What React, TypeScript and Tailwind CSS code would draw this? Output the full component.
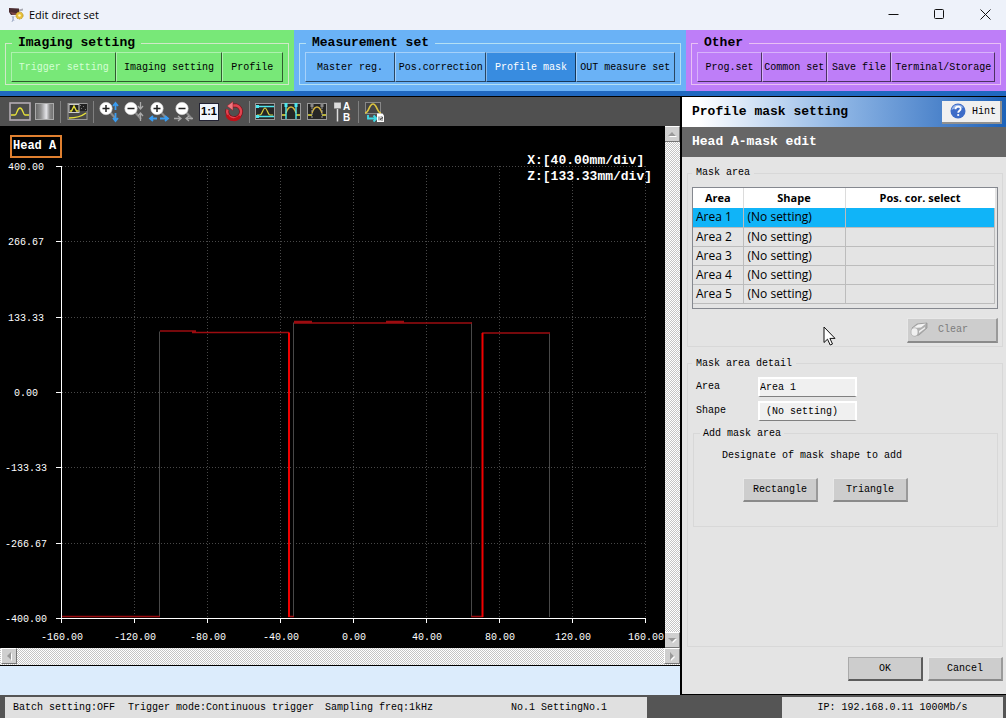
import React from "react";

const RAISED =
  "border border-t-white/40 border-l-white/40 border-b-black/60 border-r-black/60";
const GRAY_BUTTON =
  "flex h-6 w-[75px] items-center justify-center border-t border-l border-r-2 border-b-2 border-t-[#e8e8e8] border-l-[#e8e8e8] border-r-[#9a9a9a] border-b-[#8a8a8a] bg-[#cdcdcd]";

type NavItem = { label: string; state?: "muted" | "active" };

function NavGroup({
  title,
  items,
  className,
  columns,
  border,
}: {
  title: string;
  items: NavItem[];
  className: string;
  columns: string;
  border: string;
}) {
  return (
    <section className={`px-[5px] py-1.5 ${className}`}>
      <fieldset className={`min-w-0 border px-[5px] py-0.5 ${border}`}>
        <legend className="ml-px px-1.5 text-[13px] leading-[14px] font-bold">{title}</legend>
        <div className={`grid ${columns}`}>
          {items.map((item) => (
            <button
              key={item.label}
              type="button"
              className={`h-[30px] whitespace-nowrap ${RAISED} ${
                item.state === "active" ? "bg-[#388ce0] text-white" : ""
              } ${item.state === "muted" ? "text-[#d4ffd4]" : ""}`}
            >
              {item.label}
            </button>
          ))}
        </div>
      </fieldset>
    </section>
  );
}

function Tool({ label, children }: { label: string; children: React.ReactNode }) {
  return (
    <button type="button" aria-label={label} className="h-[22px] w-[22px]">
      <svg viewBox="0 0 22 22" className="block h-full w-full" fill="none">
        {children}
      </svg>
    </button>
  );
}

function Separator() {
  return <span className="mx-1 h-[22px] w-px bg-[#808080]" />;
}

function Lens({ x, minus }: { x: number; minus?: boolean }) {
  return (
    <g>
      <path d={`M${x + 3} 10l7 8`} stroke="#8a8a8a" strokeWidth="2" />
      <circle cx={x} cy="7.5" r="6.2" fill="#fff" stroke="#d0d0d0" strokeWidth="0.6" />
      <path d={minus ? `M${x - 3.5} 7.5h7` : `M${x - 3.5} 7.5h7M${x} 4v7`} stroke="#222" strokeWidth="1.5" />
    </g>
  );
}

function Toolbar() {
  return (
    <div className="flex h-[29px] items-center bg-[#505050] pl-[9px]">
      <div className="flex gap-[3px]">
        <Tool label="Profile view">
          <rect x="1" y="2" width="20" height="17" fill="#4c4c4c" stroke="#b4acb4" strokeWidth="1.6" />
          <path d="M2 14h4c2 0 2-7 5-7s3 7 5 7h4" stroke="#e6e03a" strokeWidth="1.3" />
        </Tool>
        <Tool label="Grayscale view">
          <defs>
            <linearGradient id="shade">
              <stop offset="0" stopColor="#666" />
              <stop offset="0.3" stopColor="#909090" />
              <stop offset="0.6" stopColor="#e4e4e8" />
              <stop offset="0.8" stopColor="#888" />
              <stop offset="1" stopColor="#707070" />
            </linearGradient>
          </defs>
          <rect x="1.5" y="2.5" width="18" height="16" fill="url(#shade)" stroke="#aaa" />
        </Tool>
      </div>
      <Separator />
      <div className="flex px-px">
        <Tool label="Combined view">
          <rect x="2" y="2.5" width="19" height="16" fill="#484848" stroke="#999" />
          <path d="M13 3h8v7h-8z" fill="#222" />
          <path d="M14 4h1v1h-1zM17 5h1v1h-1zM19 8h1v1h-1zM15 7h1v1h-1z" fill="#777" />
          <rect x="3" y="3.5" width="10" height="8" fill="#222" stroke="#ccc" />
          <path d="M4 10h1.5l2.5-5 2.5 5h2" stroke="#e6e03a" strokeWidth="1.4" />
          <path d="M3 17c6 0 13-2 17-5" stroke="#e6e03a" strokeWidth="1.5" />
        </Tool>
      </div>
      <Separator />
      <div className="flex gap-[3px]">
        <Tool label="Zoom in vertically">
          <Lens x={8} />
          <path d="M17.5 9V2M15 5l2.5-3 2.5 3M17.5 12v8M15 17l2.5 3 2.5-3" stroke="#3a9cf0" strokeWidth="1.8" />
        </Tool>
        <Tool label="Zoom out vertically">
          <Lens x={8} minus />
          <path d="M17.5 1v7M15 5l2.5 3 2.5-3M17.5 20v-8M15 15l2.5-3 2.5 3" stroke="#aaa" strokeWidth="1.3" />
        </Tool>
        <Tool label="Zoom in horizontally">
          <Lens x={9} />
          <path d="M9 17.5H2M5 15l-3 2.5 3 2.5M12 17.5h8M17 15l3 2.5-3 2.5" stroke="#3a9cf0" strokeWidth="1.8" />
        </Tool>
        <Tool label="Zoom out horizontally">
          <Lens x={9} minus />
          <path d="M1 17.5h7M5 15l3 2.5-3 2.5M20 17.5h-7M16 15l-3 2.5 3 2.5" stroke="#aaa" strokeWidth="1.3" />
        </Tool>
        <button
          type="button"
          className="mx-px my-0.5 flex h-[18px] w-5 items-center justify-center border border-[#223] bg-[#f0f5fc] font-['Liberation_Sans',sans-serif] text-[11px] font-bold"
        >
          1:1
        </button>
        <Tool label="Redraw">
          <path d="M4.5 8.5a7 6.5 0 1 0 9-4H8" stroke="#7c1018" strokeWidth="3.8" />
          <path d="M4.5 8.5a7 6.5 0 1 0 9-4H8" stroke="#e04450" strokeWidth="2.4" />
          <path d="M4 14a7 6.5 0 0 0 13 1" stroke="#c01018" strokeWidth="3" />
          <path d="M10 0.5L4 5l6 4.5z" fill="#f07880" stroke="#8c1820" strokeWidth="0.5" />
        </Tool>
      </div>
      <Separator />
      <div className="flex gap-1">
        <Tool label="Height range">
          <rect x="1.5" y="2.5" width="19" height="16" fill="#262626" stroke="#999" />
          <path d="M3 14h3c2 0 3-7 5-7s3 7 5 7h3" stroke="#d8d040" strokeWidth="1.2" />
          <path d="M2 5.5h18M2 15.5h18" stroke="#4fe8ee" strokeWidth="1.6" />
          <path d="M2 4h3v3H2zM2 14h3v3H2z" fill="#4fe8ee" />
        </Tool>
        <Tool label="Width range">
          <rect x="1.5" y="2.5" width="19" height="16" fill="#262626" stroke="#999" />
          <path d="M2 14h4M16 14h4" stroke="#e8e040" strokeWidth="1.6" />
          <path d="M6 12c1-3 3-6 5-6s4 3 5 6" stroke="#d8b840" strokeWidth="1.4" />
          <path d="M6 3v15M16 3v15" stroke="#4fe8ee" strokeWidth="1.4" />
          <path d="M4.5 2h3v4h-3zM14.5 2h3v4h-3z" fill="#4fe8ee" />
        </Tool>
        <Tool label="Masked range">
          <rect x="1.5" y="2.5" width="19" height="16" fill="#262626" stroke="#999" />
          <path d="M2 14h4M16 14h4" stroke="#e8e040" strokeWidth="1.6" />
          <path d="M6 12c1-3 3-6 5-6s4 3 5 6" stroke="#d8b840" strokeWidth="1.4" />
          <path d="M6 3v15M16 3v15" stroke="#999" strokeDasharray="2 1" />
          <path d="M4.5 2h3v4h-3zM14.5 2h3v4h-3z" fill="#888" />
        </Tool>
        <button type="button" className="flex h-[22px] w-[22px] items-center gap-0.5 pl-0.5">
          <svg viewBox="0 0 7 20" className="h-5 w-[7px]" fill="none">
            <rect x="0" y="0.5" width="7" height="6" fill="#ddd" stroke="#888" strokeWidth="0.5" />
            <path d="M3.500 7v12.500" stroke="#ddd" strokeWidth="1.5" />
          </svg>
          <span className="flex flex-col font-['Liberation_Sans',sans-serif] text-[10px] leading-[11px] font-bold text-white">
            <span>A</span>
            <span>B</span>
          </span>
        </button>
      </div>
      <Separator />
      <Tool label="Save profile">
        <rect x="2.5" y="1.5" width="15" height="11" fill="#444" stroke="#888" />
        <path d="M2 12c4 0 4-9 8-9s4 9 8 9" stroke="#dcc440" strokeWidth="1.7" />
        <path d="M5 14v3.5h8M10.5 14.5l3 3-3 3" stroke="#40d8e4" strokeWidth="1.9" />
        <path d="M14 12.5h5.5l1.5 2v6.5h-7z" fill="#fff" />
        <path d="M16 15.5v4M17.500 16h2v1.5h-2v1.5h2.5" stroke="#333" strokeWidth="0.8" />
      </Tool>
    </div>
  );
}

const X_TICKS = ["-160.00", "-120.00", "-80.00", "-40.00", "0.00", "40.00", "80.00", "120.00", "160.00"];
const Y_TICKS = ["400.00", "266.67", "133.33", "0.00", "-133.33", "-266.67", "-400.00"];

function ProfileChart() {
  return (
    <div className="relative min-w-0 flex-1 bg-black">
      <svg viewBox="0 0 665 522" className="block w-full" fill="none" fontFamily="Liberation Mono, monospace" fontSize="10">
        {X_TICKS.map((t, i) => {
          const x = Math.round(61 + i * 73) + 0.5;
          return (
            <g key={t}>
              {i > 0 && <path d={`M${x} 40V492`} stroke="#484848" strokeDasharray="1 2" />}
              <path d={`M${x} 492v5`} stroke="#fff" />
              <text x={x + 0.5} y="514" fill="#fff" textAnchor="middle">{t}</text>
            </g>
          );
        })}
        {Y_TICKS.map((t, i) => {
          const y = Math.round(40 + i * 75.33) + 0.5;
          return (
            <g key={t}>
              {i < 6 && <path d={`M62 ${y}H645`} stroke="#484848" strokeDasharray="1 2" />}
              <path d={`M56 ${y}h5`} stroke="#fff" />
              <text x={i === 3 ? 38 : i < 3 ? 44 : 47} y={y + 3} fill="#fff" textAnchor="end">{t}</text>
            </g>
          );
        })}
        <path d="M159.5 491V205.5M293.5 491V196.5M471.5 491V196.5M549.5 491V207.5" stroke="#484848" />
        <path
          d="M62 490.5H160M288 490.5H294M471 490.5H483M160 205H196M192 206.5H289M294 195.5H312M294 197H472M386 195.5H404M482 207H550"
          stroke="#9c0c10"
          strokeWidth="1.5"
        />
        <path d="M289 491V206.5M482.5 491V207" stroke="#f00000" strokeWidth="2" />
        <path d="M61.5 40V492.5H646" stroke="#fff" />
      </svg>
      <div className="absolute top-[9px] left-[10px] border-2 border-[#e08030] pr-1 pl-px text-[12px] leading-[19px] font-bold text-white">
        Head A
      </div>
      <div className="absolute top-[27px] right-[13px] text-[13px] leading-4 font-bold text-white">
        <p>X:[40.00mm/div]</p>
        <p>Z:[133.33mm/div]</p>
      </div>
    </div>
  );
}

const CHECKER =
  "bg-[repeating-conic-gradient(#ffffff_0_25%,#c4c4c4_0_50%)] bg-[length:2px_2px]";

function ScrollButton({ label, points }: { label: string; points: string }) {
  return (
    <button
      type="button"
      aria-label={label}
      className="flex h-4 w-4 items-center justify-center border border-t-white border-l-white border-r-[#777] border-b-[#777] bg-[#cfcfcf]"
    >
      <svg viewBox="0 0 10 10" className="h-2.5 w-2.5">
        <polygon points={points} fill="#fff" transform="translate(1 1)" />
        <polygon points={points} fill="#999" />
      </svg>
    </button>
  );
}

const AREAS = ["Area 1", "Area 2", "Area 3", "Area 4", "Area 5"];

function MaskTable() {
  return (
    <div className="border border-[#85888f] pr-[2px] pb-1">
      <table className="w-full table-fixed border-collapse font-['Open_Sans','Noto_Sans',sans-serif] text-[12px]">
        <colgroup>
          <col className="w-[50px]" />
          <col className="w-[102px]" />
          <col />
        </colgroup>
        <thead>
          <tr className="h-5 bg-white leading-4">
            <th className="p-0 text-[11px]">Area</th>
            <th className="border-l border-[#dcdcdc] p-0 text-[11px]">Shape</th>
            <th className="border-l border-[#dcdcdc] p-0 text-[11px]">Pos. cor. select</th>
          </tr>
        </thead>
        <tbody>
          {AREAS.map((a, i) => (
            <tr key={a} className={`h-[19px] border-b border-[#bcbcbc] leading-4 ${i === 0 ? "bg-[#10b4f8]" : ""}`}>
              <td className="p-0 pl-[3px]">{a}</td>
              <td className="border-l border-[#bcbcbc] p-0 pl-1">(No setting)</td>
              <td className="border-x border-[#bcbcbc] p-0" />
            </tr>
          ))}
        </tbody>
      </table>
    </div>
  );
}

function SettingsPanel() {
  const field =
    "h-5 w-[99px] border-2 border-t-white border-l-white border-r-white border-b border-b-[#808080] bg-[#f0f0f0] outline-none";
  return (
    <aside className="relative flex w-[326px] shrink-0 flex-col border-b border-l-2 border-black bg-[#e4e4e4]">
      <header className="flex h-[30px] items-center justify-between bg-linear-to-r from-white from-5% via-[#8cb4e4] via-50% to-[#1c62b8] pr-1 pl-2.5">
        <h1 className="text-[13px] font-bold">Profile mask setting</h1>
        <button
          type="button"
          className="flex h-[23px] w-[60px] items-center gap-1.5 border-r-2 border-b-2 border-[#909090] bg-[#f0f0f0] pl-2"
        >
          <svg viewBox="0 0 16 16" className="h-4 w-4">
            <circle cx="8" cy="8" r="7.5" fill="#3d6cc8" />
            <path d="M1.5 7a6.5 6.5 0 0 1 12-2C10 4 5 5 1.5 7z" fill="#9bb8ea" />
            <path d="M5.5 6.2c0-3.5 5.2-3.3 5.2-.4C10.7 7.8 8.2 7.8 8.2 9.7" fill="none" stroke="#fff" strokeWidth="1.8" />
            <circle cx="8.2" cy="12" r="1.1" fill="#fff" />
          </svg>
          Hint
        </button>
      </header>
      <h2 className="h-[30px] bg-[#666] pl-2.5 text-[13px] leading-[30px] font-bold text-white">Head A-mask edit</h2>

      <div className="flex flex-1 flex-col pt-2.5 pr-[3px] pl-[5px]">
        <fieldset className="min-w-0 border border-[#d8d8d8] px-1 pt-2 pb-[3px]">
          <legend className="px-1 leading-3">Mask area</legend>
          <MaskTable />
          <button
            type="button"
            className="mt-[9px] ml-auto flex h-[25px] w-[91px] items-center gap-2.5 border-t border-l border-r-2 border-b-2 border-t-[#e8e8e8] border-l-[#e8e8e8] border-r-[#9a9a9a] border-b-[#8a8a8a] bg-[#cdcdcd] pl-0.5 text-[#7c7c7c]"
          >
            <svg viewBox="0 0 18 16" className="h-4 w-[18px]">
              <path d="M2 6l5-4 10-1v5l-8 7-5 1z" fill="#b0b0b0" stroke="#909090" strokeWidth="0.7" />
              <path d="M3 6l5-3.5 8-1-5 4z" fill="#f4f4f4" />
              <path d="M9 9l6-4v1.5l-6 4.5z" fill="#f0f0f0" />
              <ellipse cx="4.5" cy="10" rx="3.5" ry="4.2" fill="#f0f0f0" stroke="#aaa" strokeWidth="0.7" />
            </svg>
            Clear
          </button>
        </fieldset>

        <fieldset className="mt-[11px] min-w-0 flex-1 border border-[#d8d8d8] px-1 pt-[7px]">
          <legend className="px-1 leading-3">Mask area detail</legend>
          <div className="grid grid-cols-[62px_1fr] items-center gap-y-1 pl-1">
            <label htmlFor="area">Area</label>
            <input id="area" readOnly defaultValue="Area 1" className={field} />
            <label htmlFor="shape">Shape</label>
            <input id="shape" readOnly defaultValue="(No setting)" className={`${field} pl-1.5`} />
          </div>
          <fieldset className="mt-[7px] ml-px min-w-0 border border-[#d8d8d8] pt-2.5 pb-6">
            <legend className="ml-1.5 px-[3px] leading-3">Add mask area</legend>
            <p className="pl-7 leading-3">Designate of mask shape to add</p>
            <div className="mt-4 flex gap-[15px] pl-[49px]">
              <button type="button" className={GRAY_BUTTON}>Rectangle</button>
              <button type="button" className={GRAY_BUTTON}>Triangle</button>
            </div>
          </fieldset>
        </fieldset>

        <div className="flex justify-end gap-[5px] pt-2.5 pb-[13px]">
          <button type="button" className="flex h-6 w-[75px] items-center justify-center border-t border-l border-r-2 border-b-2 border-t-[#aaa] border-l-[#aaa] border-r-[#5c5c5c] border-b-[#5c5c5c] bg-[#cdcdcd]">
            OK
          </button>
          <button type="button" className={GRAY_BUTTON}>Cancel</button>
        </div>
      </div>

      <svg viewBox="0 0 13 20" className="absolute top-[229px] left-[141px] h-5 w-[13px]">
        <path d="M1 1v15.5l3.5-3.3 2.7 5.8 2.3-1-2.6-5.6H12z" fill="#fff" stroke="#111" />
      </svg>
    </aside>
  );
}

export default function App() {
  return (
    <div className="flex min-h-screen flex-col bg-[#dcecfc] font-['Liberation_Mono','DejaVu_Sans_Mono',monospace] text-[10px] text-black">
      <div className="flex h-[30px] items-center bg-[#eef2fa] pr-[15px] pl-2">
        <svg viewBox="0 0 16 16" className="mr-[5px] h-4 w-4">
          <path d="M1 1l10 .5v6L3 8 1 5z" fill="#4a2c30" />
          <path d="M2 5l3 3 5-.5v-1z" fill="#7c4848" />
          <path d="M11 2.5l4-1v2l-4 1z" fill="#a8a8b0" />
          <path d="M6 9l-2 6M4 9l2 5" stroke="#a8b4cc" />
          <circle cx="11.5" cy="8.5" r="3.6" fill="#e8c038" stroke="#b09030" strokeWidth="0.8" strokeDasharray="1.5 0.8" />
          <circle cx="11.5" cy="8.5" r="1.3" fill="#fff4c0" />
        </svg>
        <span className="flex-1 font-['Open_Sans','Noto_Sans',sans-serif] text-[11px]">Edit direct set</span>
        <div className="flex gap-[35px]">
          <button type="button" aria-label="Minimize">
            <svg viewBox="0 0 11 12" className="h-3 w-[11px]"><path d="M0.5 5.5h10" stroke="#111" /></svg>
          </button>
          <button type="button" aria-label="Maximize">
            <svg viewBox="0 0 11 12" className="h-3 w-[11px]"><rect x="0.5" y="0.5" width="9" height="9" rx="1" fill="none" stroke="#111" /></svg>
          </button>
          <button type="button" aria-label="Close">
            <svg viewBox="0 0 11 12" className="h-3 w-[11px]"><path d="M0.5 0.5l10 10M10.5 0.5l-10 10" stroke="#111" /></svg>
          </button>
        </div>
      </div>

      <nav className="grid grid-cols-[294fr_392fr_320fr]">
        <NavGroup
          title="Imaging setting"
          className="bg-[#78e878]"
          border="border-[#d0e8c8]"
          columns="grid-cols-[105fr_105fr_61fr]"
          items={[{ label: "Trigger setting", state: "muted" }, { label: "Imaging setting" }, { label: "Profile" }]}
        />
        <NavGroup
          title="Measurement set"
          className="bg-[#6ab2f6]"
          border="border-[#b4e0f4]"
          columns="grid-cols-[90fr_91fr_89fr_99fr]"
          items={[
            { label: "Master reg." },
            { label: "Pos.correction" },
            { label: "Profile mask", state: "active" },
            { label: "OUT measure set" },
          ]}
        />
        <NavGroup
          title="Other"
          className="bg-[#be7ef8]"
          border="border-[#e8c0f4]"
          columns="grid-cols-[65fr_65fr_65fr_104fr]"
          items={[{ label: "Prog.set" }, { label: "Common set" }, { label: "Save file" }, { label: "Terminal/Storage" }]}
        />
      </nav>
      <div className="h-1.5 border-b border-black bg-[#2068c0]" />

      <main className="flex flex-1">
        <div className="flex min-w-0 flex-1 flex-col">
          <Toolbar />
          <div className="flex">
            <ProfileChart />
            <div className={`flex w-[15px] shrink-0 flex-col items-end justify-between ${CHECKER}`}>
              <ScrollButton label="Scroll up" points="1,7 5,3 9,7" />
              <ScrollButton label="Scroll down" points="1,3 5,7 9,3" />
            </div>
          </div>
          <div className={`flex h-[18px] justify-between border-b border-black pl-px ${CHECKER}`}>
            <ScrollButton label="Scroll left" points="7,1 3,5 7,9" />
            <ScrollButton label="Scroll right" points="3,1 7,5 3,9" />
          </div>
        </div>
        <SettingsPanel />
      </main>

      <footer className="grid h-[23px] grid-cols-[642fr_221fr] gap-[135px] bg-[#555] pt-0.5 pr-[3px] pl-[5px] leading-[22px]">
        <div className="flex bg-[#e0e0e0] pl-2 whitespace-nowrap">
          <span className="w-[115px]">Batch setting:OFF</span>
          <span className="w-[197px]">Trigger mode:Continuous trigger</span>
          <span className="w-[186px]">Sampling freq:1kHz</span>
          <span>No.1 SettingNo.1</span>
        </div>
        <div className="bg-[#e0e0e0] text-center">IP: 192.168.0.11 1000Mb/s</div>
      </footer>
    </div>
  );
}
